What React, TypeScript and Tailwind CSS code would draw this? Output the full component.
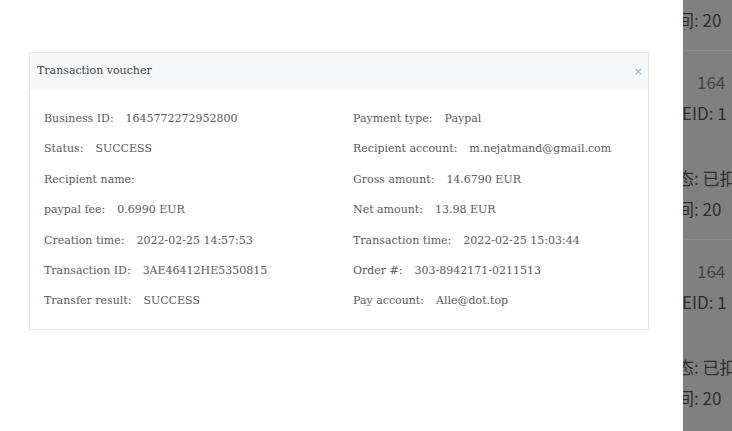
import * as React from "react";

type Field = { label: string; value: string };

const left: Field[] = [
  { label: "Business ID:", value: "1645772272952800" },
  { label: "Status:", value: "SUCCESS" },
  { label: "Recipient name:", value: "" },
  { label: "paypal fee:", value: "0.6990 EUR" },
  { label: "Creation time:", value: "2022-02-25 14:57:53" },
  { label: "Transaction ID:", value: "3AE46412HE5350815" },
  { label: "Transfer result:", value: "SUCCESS" },
];

const right: Field[] = [
  { label: "Payment type:", value: "Paypal" },
  { label: "Recipient account:", value: "m.nejatmand@gmail.com" },
  { label: "Gross amount:", value: "14.6790 EUR" },
  { label: "Net amount:", value: "13.98 EUR" },
  { label: "Transaction time:", value: "2022-02-25 15:03:44" },
  { label: "Order #:", value: "303-8942171-0211513" },
  { label: "Pay account:", value: "Alle@dot.top" },
];

const Row: React.FC<{ field: Field }> = ({ field }) => (
  <div className="h-[30.4px] flex items-center gap-[12px] whitespace-nowrap">
    <span>{field.label}</span>
    <span>{field.value}</span>
  </div>
);

const sideRows = [
  { text: "时间: 20", cut: "-ml-[23px]", gap: "" },
  { text: "", cut: "", gap: "border" },
  { text: "164", cut: "ml-[14px] text-[#444]", gap: "" },
  { text: "户EID: 1", cut: "-ml-[18px]", gap: "" },
  { text: "", cut: "", gap: "space" },
  { text: "状态: 已扣", cut: "-ml-[23px]", gap: "" },
  { text: "时间: 20", cut: "-ml-[23px]", gap: "" },
  { text: "", cut: "", gap: "border" },
  { text: "164", cut: "ml-[14px] text-[#444]", gap: "" },
  { text: "户EID: 1", cut: "-ml-[18px]", gap: "" },
  { text: "", cut: "", gap: "space" },
  { text: "状态: 已扣", cut: "-ml-[23px]", gap: "" },
  { text: "时间: 20", cut: "-ml-[23px]", gap: "" },
];

const SidePanel: React.FC = () => (
  <div
    className="w-[49px] h-[431px] bg-[#808080] overflow-hidden text-[17px] text-[#2e2e2e] pt-[4px]"
    style={{ fontFamily: '"Noto Sans CJK SC", "Noto Sans", sans-serif' }}
  >
    {sideRows.map((r, i) =>
      r.gap === "border" ? (
        <div key={i} className="h-[31px] flex items-center">
          <div className="w-full h-px bg-[#8a8a8a]" />
        </div>
      ) : r.gap === "space" ? (
        <div key={i} className="h-[34px]" />
      ) : (
        <div key={i} className={`h-[31px] leading-[31px] whitespace-nowrap ${r.cut}`}>
          {r.text}
        </div>
      )
    )}
  </div>
);

export default function App() {
  return (
    <div className="w-[732px] h-[431px] bg-white flex overflow-hidden">
      <div className="flex-1 pt-[52px] pl-[29px] pr-[34px]">
        <div
          className="border border-[#e4e6ea] bg-white text-[11px] text-[#5a5a5a]"
          style={{ fontFamily: '"DejaVu Serif", serif' }}
        >
          <div className="h-[37px] bg-[#f6f7f9] flex items-center justify-between pl-[7px] pr-[6px]">
            <span className="text-[#444]">Transaction voucher</span>
            <span className="text-[#aaa] text-[13px] leading-none" style={{ fontFamily: '"Liberation Sans", sans-serif' }}>
              ×
            </span>
          </div>
          <div className="grid grid-cols-[309px_1fr] pl-[14px] pt-[14px] pb-[12px]">
            <div className="flex flex-col">
              {left.map((f) => (
                <Row key={f.label} field={f} />
              ))}
            </div>
            <div className="flex flex-col">
              {right.map((f) => (
                <Row key={f.label} field={f} />
              ))}
            </div>
          </div>
        </div>
      </div>
      <SidePanel />
    </div>
  );
}
